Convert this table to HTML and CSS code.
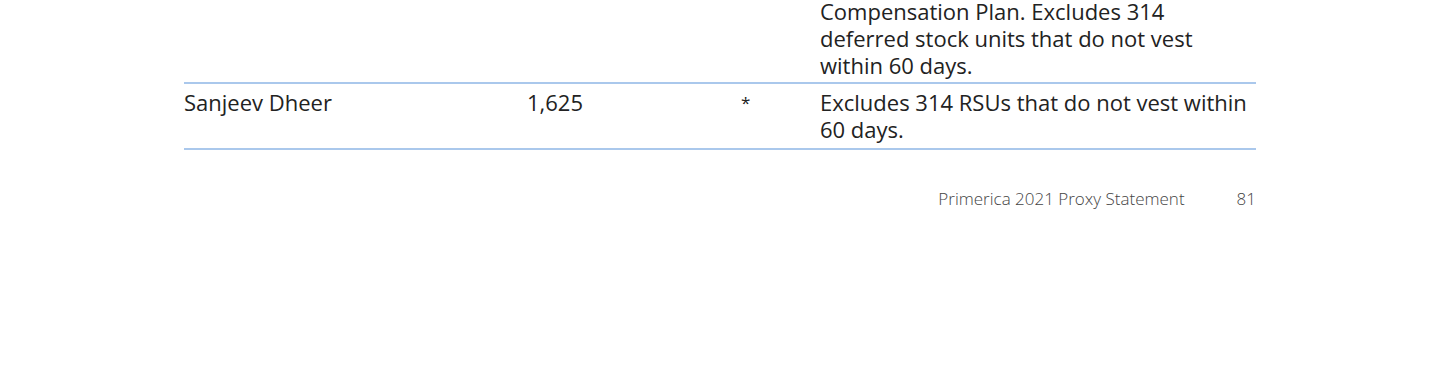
FILE: index.html
```html
<!DOCTYPE html>
<html lang="en">
<head>
  <meta charset="UTF-8">
  <meta name="viewport" content="width=device-width, initial-scale=1.0">
  <title>Primerica 2021 Proxy Statement - Page 81</title>
  <link rel="stylesheet" href="styles.css">
</head>
<body>
  <div class="page">
    <div class="ownership">
      <div class="row row-cont">
        <div class="cell name"></div>
        <div class="cell shares"></div>
        <div class="cell pct"></div>
        <div class="cell notes">Compensation Plan. Excludes 314 deferred stock units that do not vest within 60 days.</div>
      </div>
      <div class="row">
        <div class="cell name">Sanjeev Dheer</div>
        <div class="cell shares">1,625</div>
        <div class="cell pct"><span class="less-than-one">*</span></div>
        <div class="cell notes">Excludes 314 RSUs that do not vest within 60 days.</div>
      </div>
    </div>

    <div class="page-footer">
      <span class="doc-title">Primerica 2021 Proxy Statement</span>
      <span class="page-num">81</span>
    </div>
  </div>
</body>
</html>
```

FILE: styles.css
```css
body {
  margin: 0;
  background: #fff;
  color: #222;
  font-family: "Open Sans", "Noto Sans", sans-serif;
}

.page {
  width: 1072px;
  margin: -2px 0 0 184px;
}

.ownership {
  font-size: 22px;
  line-height: 27px;
}

.row {
  display: grid;
  grid-template-columns: 343px 214px 79px 1fr;
  padding: 5px 0;
  border-bottom: 2px solid #aac8ec;
}

/* continuation of the row from the previous page */
.row-cont {
  padding-top: 0;
  padding-bottom: 3px;
}

/* less than 1% marker */
.less-than-one {
  font-size: 17px;
  vertical-align: 3px;
  color: #222;
}

.page-footer {
  display: flex;
  justify-content: flex-end;
  gap: 52px;
  margin-top: 37px;
  font-size: 17px;
  font-weight: 300;
  color: #444;
}
```
